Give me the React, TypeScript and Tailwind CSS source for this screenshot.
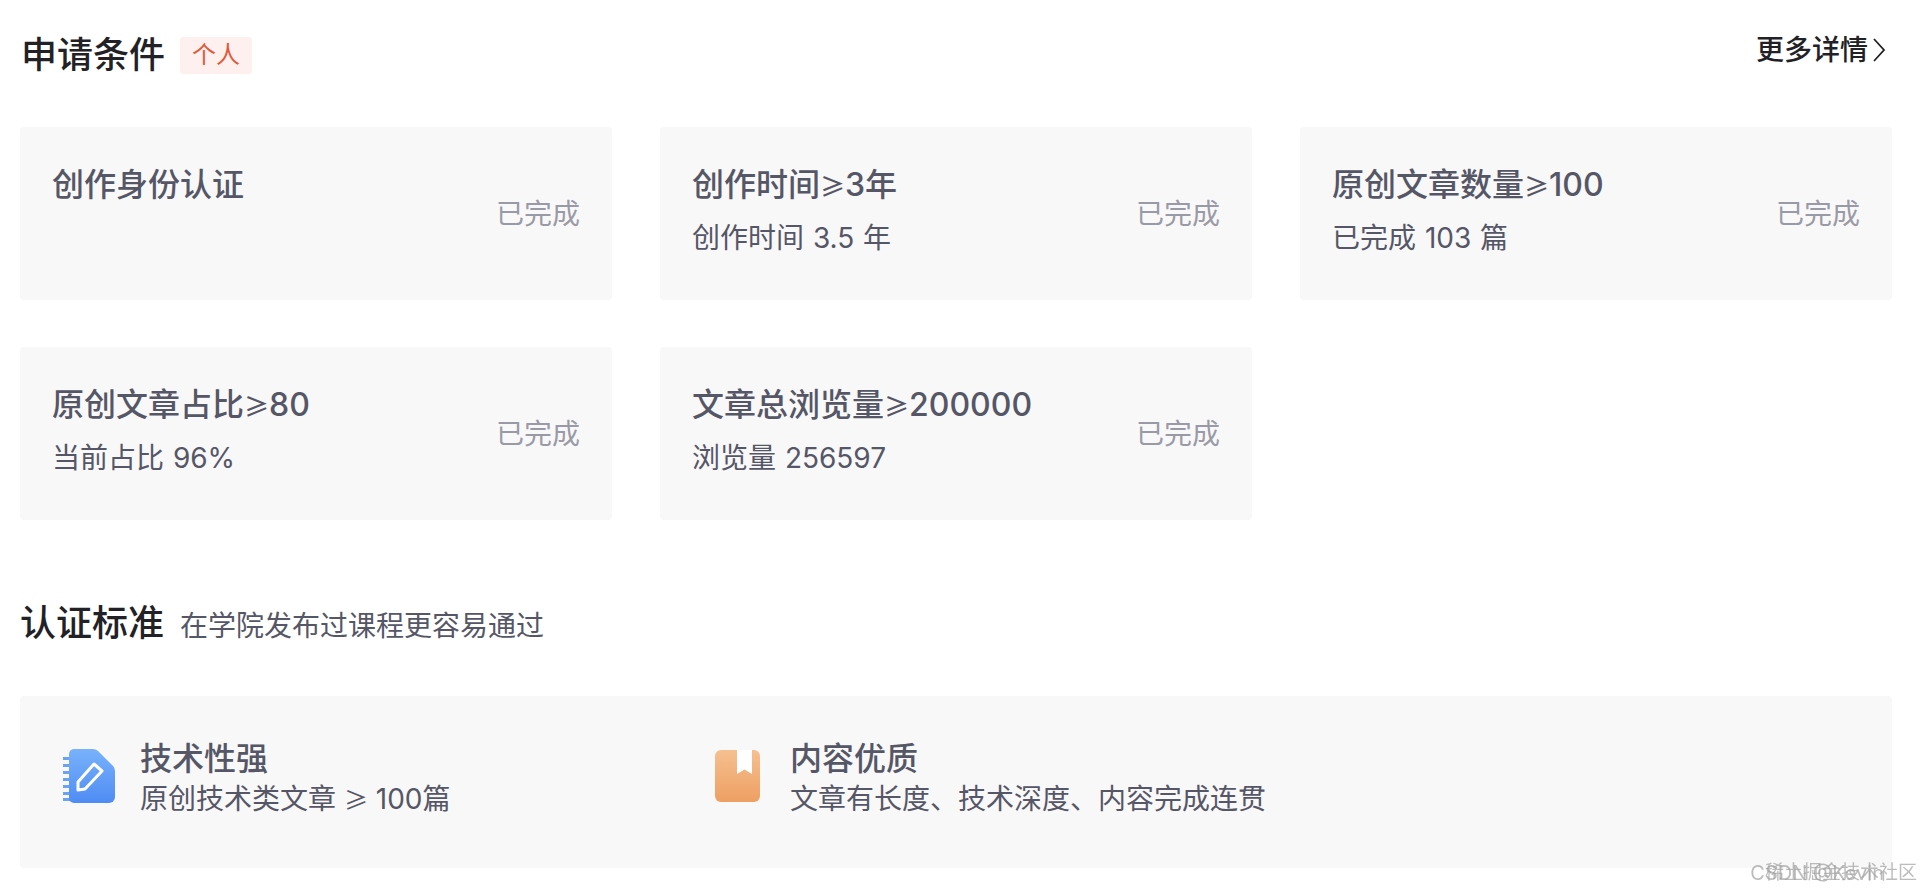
import React from "react";

const font = { fontFamily: '"Inter", "Noto Sans CJK SC", sans-serif' };

const cards = [
  { title: "创作身份认证", limit: "", sub: "" },
  { title: "创作时间", limit: "3年", sub: "创作时间 3.5 年" },
  { title: "原创文章数量", limit: "100", sub: "已完成 103 篇" },
  { title: "原创文章占比", limit: "80", sub: "当前占比 96%" },
  { title: "文章总浏览量", limit: "200000", sub: "浏览量 256597" },
];

function Card({ title, limit, sub }: { title: string; limit: string; sub: string }) {
  return (
    <div className="relative h-[173px] rounded-[4px] bg-[#f8f8f9] pl-[32px] pr-[32px] pt-[35px]">
      <div className="text-[32px] leading-[46px] font-medium text-[#555666]">
        {title}
        {limit && <span className="font-['Noto_Sans_CJK_SC'] text-[25px] leading-none">≥</span>}
        {limit}
      </div>
      {sub && <div className="mt-[10px] text-[28px] leading-[40px] text-[#555666] [word-spacing:1px]">{sub}</div>}
      <div className="absolute right-[32px] top-[67px] text-[28px] leading-[40px] text-[#9a9aa6]">已完成</div>
    </div>
  );
}

function NoteIcon() {
  return (
    <svg width="52" height="54" viewBox="0 0 52 54" className="shrink-0">
      <defs>
        <linearGradient id="blue" x1="0" y1="0" x2="0" y2="1">
          <stop offset="0" stopColor="#78b2fb" />
          <stop offset="1" stopColor="#4f8cf3" />
        </linearGradient>
      </defs>
      <g fill="#6ba3ee">
        <rect x="0" y="8" width="7" height="3" />
        <rect x="0" y="15" width="7" height="3" />
        <rect x="0" y="22" width="7" height="3" />
        <rect x="0" y="29" width="7" height="3" />
        <rect x="0" y="36" width="7" height="3" />
        <rect x="0" y="43" width="7" height="3" />
        <rect x="0" y="49" width="7" height="3" />
      </g>
      <path d="M11 0H30Q33 0 35 2L50 17Q52 19 52 22V48A6 6 0 0 1 46 54H11A5 5 0 0 1 6 49V5A5 5 0 0 1 11 0Z" fill="url(#blue)" />
      <path d="M31 15L39 22L22 40L15 41L15 33Z" fill="none" stroke="#fff" strokeWidth="3" strokeLinejoin="round" />
    </svg>
  );
}

function BookIcon() {
  return (
    <svg width="45" height="52" viewBox="0 0 45 52" className="shrink-0">
      <defs>
        <linearGradient id="orange" x1="0" y1="0" x2="0" y2="1">
          <stop offset="0" stopColor="#f5c08f" />
          <stop offset="1" stopColor="#ee9f63" />
        </linearGradient>
      </defs>
      <rect width="45" height="52" rx="6" fill="url(#orange)" />
      <path d="M22 0H37V24L29.5 19.5L22 24Z" fill="#fff" />
    </svg>
  );
}

export default function App() {
  return (
    <div style={font} className="relative h-[892px] w-[1924px] overflow-hidden bg-white pl-[20px] pr-[32px]">
      <div className="flex h-[127px] items-start justify-between">
        <div className="flex items-center pt-[35px]">
          <h2 className="pl-[1px] text-[36px] leading-[40px] font-medium text-[#222226]">申请条件</h2>
          <span className="ml-[15px] flex h-[37px] w-[72px] items-center justify-center rounded-[3px] bg-[#fdf0ee] text-[24px] text-[#e0593a]">个人</span>
        </div>
        <div className="flex items-center pr-[6px] pt-[30px] text-[28px] leading-[40px] font-medium text-[#222226]">
          更多详情
          <svg width="14" height="26" viewBox="0 0 14 26" className="ml-[4px]" fill="none" stroke="#222226" strokeWidth="1.8">
            <path d="M2 2L12 13L2 24" />
          </svg>
        </div>
      </div>

      <div className="grid grid-cols-3 gap-x-[48px] gap-y-[47px]">
        {cards.map((c) => (
          <Card key={c.title} {...c} />
        ))}
      </div>

      <div className="mt-[78px] flex h-[50px] items-center">
        <h2 className="text-[36px] leading-[40px] font-medium text-[#222226]">认证标准</h2>
        <span className="ml-[16px] pt-[5px] text-[28px] leading-[40px] text-[#555666]">在学院发布过课程更容易通过</span>
      </div>

      <div className="mt-[48px] flex h-[172px] items-center rounded-[4px] bg-[#f8f8f9] pb-[12px]">
        <div className="ml-[43px] flex items-center">
          <NoteIcon />
          <div className="ml-[25px] w-[575px] pt-[3px]">
            <div className="text-[32px] leading-[42px] font-medium text-[#555666]">技术性强</div>
            <div className="text-[28px] leading-[38px] text-[#555666]">
              原创技术类文章 <span className="font-['Noto_Sans_CJK_SC'] text-[24px] leading-none">≥</span> 100篇
            </div>
          </div>
        </div>
        <div className="flex items-center">
          <BookIcon />
          <div className="ml-[30px] pt-[3px]">
            <div className="text-[32px] leading-[42px] font-medium text-[#555666]">内容优质</div>
            <div className="text-[28px] leading-[38px] text-[#555666]">文章有长度、技术深度、内容完成连贯</div>
          </div>
        </div>
      </div>

      <div className="absolute right-[40px] bottom-[8px] text-[20px] leading-[22px] text-[#a0a0a0] opacity-70 blur-[0.5px]">CSDN @Kevin</div>
      <div className="absolute right-[7px] bottom-[8px] text-[19px] leading-[22px] text-[#a0a0a0] opacity-70 blur-[0.5px]">稀土掘金技术社区</div>
    </div>
  );
}
